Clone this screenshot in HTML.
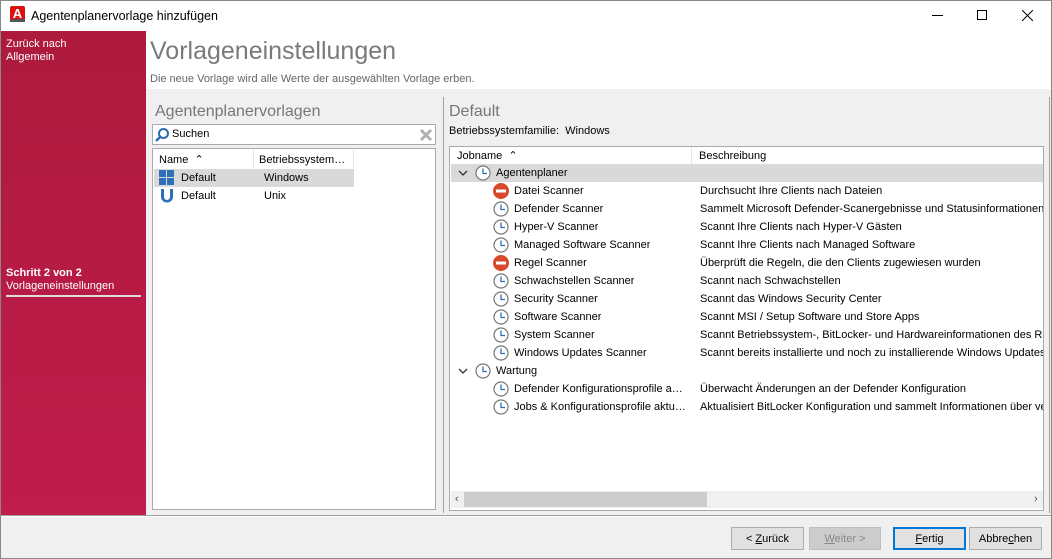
<!DOCTYPE html>
<html><head><meta charset="utf-8"><style>
*{box-sizing:border-box;margin:0;padding:0}
body{width:1052px;height:559px;position:relative;overflow:hidden;background:#f0f0f0;font-family:"Liberation Sans",sans-serif;font-size:11px;color:#000}
.a{position:absolute;white-space:nowrap}
.t{position:absolute;white-space:nowrap;overflow:hidden;line-height:19px;height:18px}
svg{position:absolute}
</style></head><body>
<div class="a" style="left:0;top:0;width:1052px;height:31px;background:#fff;border:1px solid #888;border-bottom:none"></div>
<div class="a" style="left:10px;top:6px;width:15px;height:15px;background:#d11;border-radius:2px;color:#fff;font-weight:bold;font-size:13px;text-align:center;line-height:15px">A</div>
<div class="a" style="left:10px;top:19px;width:15px;height:3px;background:#555"></div>
<div class="a" style="left:31px;top:9px;font-size:12.5px">Agentenplanervorlage hinzufügen</div>
<div class="a" style="left:932px;top:15px;width:11px;height:1px;background:#000"></div>
<div class="a" style="left:977px;top:10px;width:10px;height:10px;border:1px solid #000"></div>
<svg style="left:1022px;top:10px" width="11" height="11"><path d="M0 0L11 11M11 0L0 11" stroke="#000" stroke-width="1"/></svg>
<div class="a" style="left:1px;top:31px;width:145px;height:485px;background:linear-gradient(#ad1a3c,#c01c4c)"></div>
<div class="a" style="left:6px;top:38px;color:#fff;line-height:13px">Zurück nach<br>Allgemein</div>
<div class="a" style="left:6px;top:267px;color:#fff;line-height:13px"><b>Schritt 2 von 2</b><br>Vorlageneinstellungen</div>
<div class="a" style="left:6px;top:295px;width:135px;height:2px;background:#ddd"></div>
<div class="a" style="left:146px;top:31px;width:905px;height:58px;background:#fff"></div>
<div class="a" style="left:150px;top:37px;font-size:25px;color:#7a7a7a">Vorlageneinstellungen</div>
<div class="a" style="left:150px;top:73px;color:#666">Die neue Vorlage wird alle Werte der ausgewählten Vorlage erben.</div>
<div class="a" style="left:155px;top:103px;font-size:16px;color:#777">Agentenplanervorlagen</div>
<div class="a" style="left:152px;top:124px;width:284px;height:21px;background:#fff;border:1px solid #aaa"></div>
<svg style="left:154px;top:127px" width="16" height="16"><circle cx="9.5" cy="6.5" r="4.5" fill="none" stroke="#2a6ab4" stroke-width="2"/><path d="M6 10L2 14" stroke="#2a6ab4" stroke-width="2.5"/></svg>
<div class="a" style="left:172px;top:128px">Suchen</div>
<svg style="left:419px;top:128px" width="14" height="14"><path d="M2 2L12 12M12 2L2 12" stroke="#b0b0b0" stroke-width="3"/></svg>
<div class="a" style="left:152px;top:148px;width:284px;height:362px;background:#fff;border:1px solid #aaa"></div>
<div class="a" style="left:253px;top:150px;width:1px;height:18px;background:#e5e5e5"></div>
<div class="a" style="left:353px;top:150px;width:1px;height:18px;background:#e5e5e5"></div>
<div class="t" style="left:159px;top:151px">Name &nbsp;⌃</div>
<div class="t" style="left:259px;top:151px">Betriebssystem…</div>
<div class="a" style="left:154px;top:169px;width:200px;height:18px;background:#d9d9d9"></div>
<svg style="left:159px;top:170px" width="16" height="16"><rect x="0" y="0" width="7" height="7" fill="#2e6fb8"/><rect x="8" y="0" width="7" height="7" fill="#2e6fb8"/><rect x="0" y="8" width="7" height="7" fill="#2e6fb8"/><rect x="8" y="8" width="7" height="7" fill="#2e6fb8"/></svg>
<div class="t" style="left:181px;top:169px">Default</div>
<div class="t" style="left:264px;top:169px">Windows</div>
<svg style="left:159px;top:188px" width="16" height="16"><path d="M2 1V9A6 5.5 0 0 0 14 9V1H11V9A3 3 0 0 1 5 9V1Z" fill="#2e6fb8"/></svg>
<div class="t" style="left:181px;top:187px">Default</div>
<div class="t" style="left:264px;top:187px">Unix</div>
<div class="a" style="left:443px;top:97px;width:1px;height:416px;background:#a0a0a0"></div>
<div class="a" style="left:449px;top:103px;font-size:16px;color:#777">Default</div>
<div class="a" style="left:449px;top:125px">Betriebssystemfamilie:&nbsp; Windows</div>
<div class="a" style="left:449px;top:146px;width:595px;height:365px;background:#fff;border:1px solid #aaa"></div>
<div class="a" style="left:691px;top:147px;width:1px;height:17px;background:#e5e5e5"></div>
<div class="t" style="left:457px;top:147px">Jobname &nbsp;⌃</div>
<div class="t" style="left:699px;top:147px">Beschreibung</div>
<div class="a" style="left:451px;top:164px;width:592px;height:18px;background:#d9d9d9"></div>
<div id="rows"></div>
<div class="a" style="left:451px;top:491px;width:592px;height:17px;background:#f0f0f0"></div>
<div class="a" style="left:464px;top:492px;width:243px;height:15px;background:#cdcdcd"></div>
<div class="a" style="left:455px;top:491px;font-size:11px;line-height:17px;color:#555">‹</div>
<div class="a" style="left:1034px;top:491px;font-size:11px;line-height:17px;color:#555">›</div>
<div class="a" style="left:1049px;top:97px;width:1px;height:416px;background:#a0a0a0"></div>
<div class="a" style="left:0;top:515px;width:1052px;height:1px;background:#a0a0a0"></div>
<div class="a" style="left:0;top:516px;width:1052px;height:1px;background:#fff"></div>
<div class="a" style="left:731px;top:527px;width:73px;height:23px;background:#e1e1e1;border:1px solid #adadad;text-align:center;line-height:22px">&lt; <u>Z</u>urück</div>
<div class="a" style="left:809px;top:527px;width:72px;height:23px;background:#ccc;border:1px solid #bfbfbf;text-align:center;line-height:22px;color:#888"><u>W</u>eiter &gt;</div>
<div class="a" style="left:893px;top:527px;width:73px;height:23px;background:#e1e1e1;border:2px solid #0078d7;text-align:center;line-height:20px"><u>F</u>ertig</div>
<div class="a" style="left:969px;top:527px;width:73px;height:23px;background:#e1e1e1;border:1px solid #adadad;text-align:center;line-height:22px">Abbre<u>c</u>hen</div>
<div class="a" style="left:0;top:31px;width:1px;height:528px;background:#888"></div>
<div class="a" style="left:1051px;top:31px;width:1px;height:528px;background:#888"></div>
<div class="a" style="left:0;top:558px;width:1052px;height:1px;background:#888"></div>
<script>
var clock='<circle cx="8" cy="8" r="7" fill="#fff" stroke="#777" stroke-width="1.2"/><path d="M8 3.5V8.5H12" fill="none" stroke="#2e6fb8" stroke-width="1.3"/>';
var stop='<circle cx="8" cy="8" r="8" fill="#d9472b"/><rect x="3" y="6.5" width="10" height="3" fill="#fff"/>';
var r=[[0,'c','Agentenplaner',''],[1,'s','Datei Scanner','Durchsucht Ihre Clients nach Dateien'],[1,'c','Defender Scanner','Sammelt Microsoft Defender-Scanergebnisse und Statusinformationen'],[1,'c','Hyper-V Scanner','Scannt Ihre Clients nach Hyper-V Gästen'],[1,'c','Managed Software Scanner','Scannt Ihre Clients nach Managed Software'],[1,'s','Regel Scanner','Überprüft die Regeln, die den Clients zugewiesen wurden'],[1,'c','Schwachstellen Scanner','Scannt nach Schwachstellen'],[1,'c','Security Scanner','Scannt das Windows Security Center'],[1,'c','Software Scanner','Scannt MSI / Setup Software und Store Apps'],[1,'c','System Scanner','Scannt Betriebssystem-, BitLocker- und Hardwareinformationen des Rechners'],[1,'c','Windows Updates Scanner','Scannt bereits installierte und noch zu installierende Windows Updates des Rechners'],[0,'c','Wartung',''],[1,'c','Defender Konfigurationsprofile a…','Überwacht Änderungen an der Defender Konfiguration'],[1,'c','Jobs &amp; Konfigurationsprofile aktu…','Aktualisiert BitLocker Konfiguration und sammelt Informationen über verwaltete Geräte']];
var h='';
r.forEach(function(x,i){var y=164+i*18;var ix=x[0]?493:475;
if(!x[0])h+='<svg style="left:458px;top:'+(y+6)+'px" width="10" height="8"><path d="M1 1L5 5L9 1" fill="none" stroke="#333" stroke-width="1.3"/></svg>';
h+='<svg style="left:'+ix+'px;top:'+(y+1)+'px" width="16" height="16">'+(x[1]=='c'?clock:stop)+'</svg>';
h+='<div class="t" style="left:'+(ix+21)+'px;top:'+y+'px">'+x[2]+'</div>';
if(x[3])h+='<div class="t" style="left:700px;top:'+y+'px;width:343px">'+x[3]+'</div>';});
document.getElementById('rows').innerHTML=h;
</script>
</body></html>
